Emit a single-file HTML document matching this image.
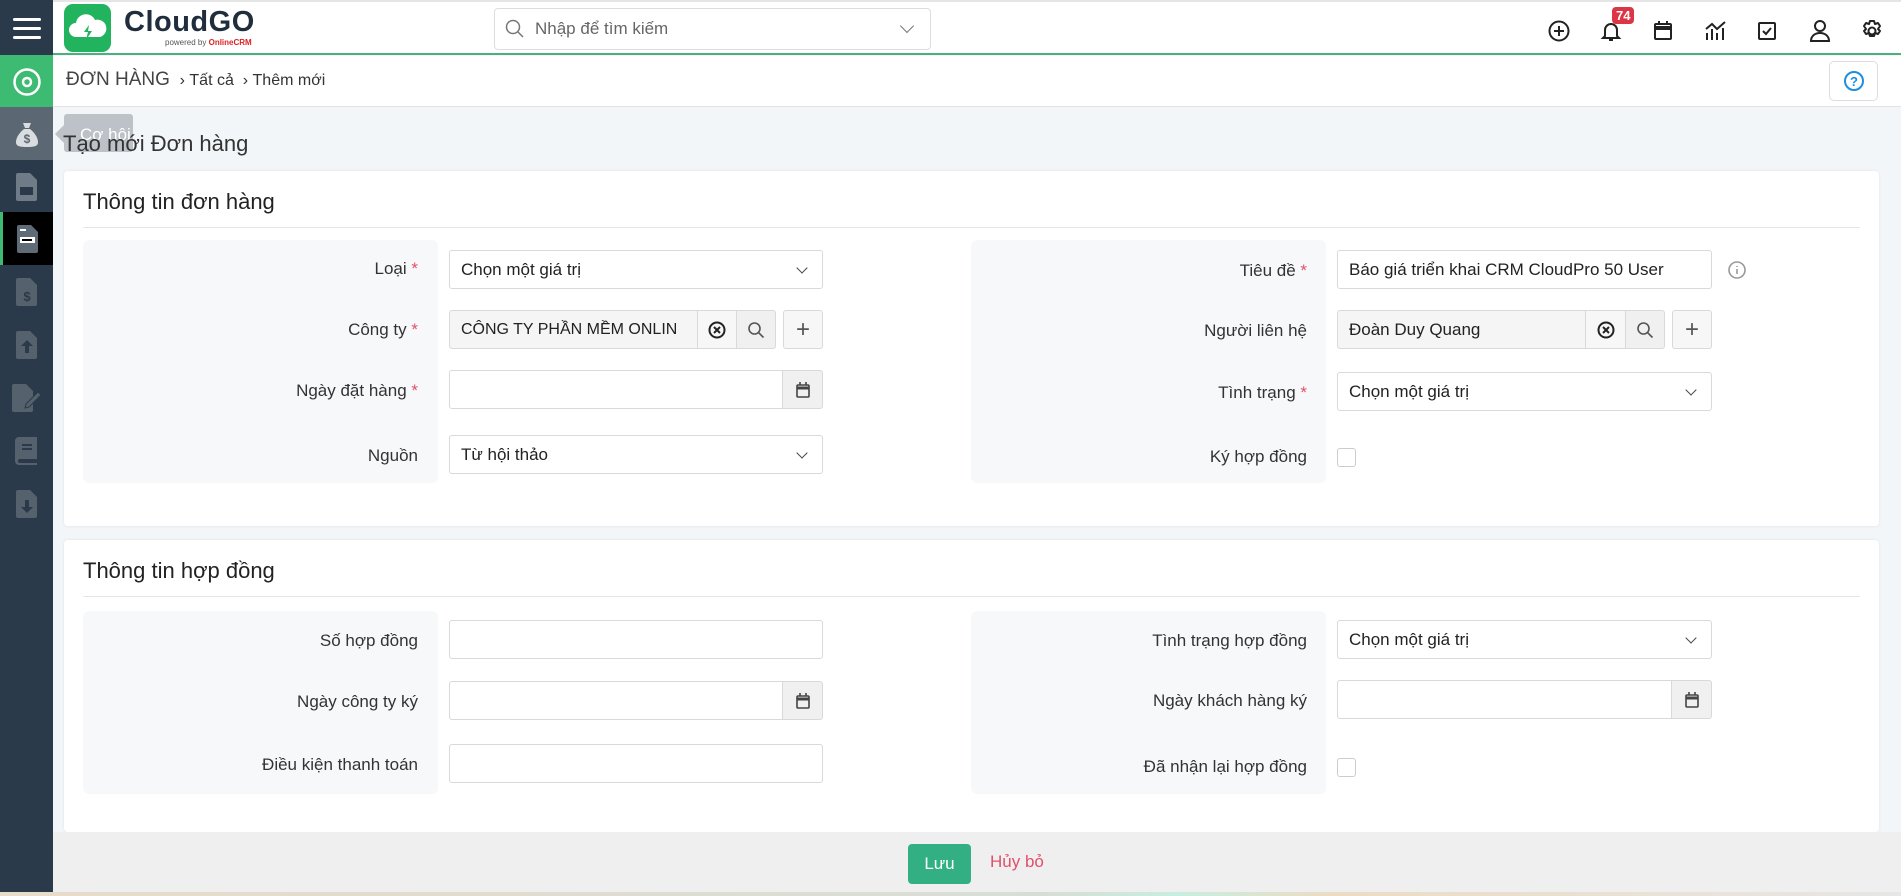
<!DOCTYPE html>
<html><head><meta charset="utf-8"><style>
*{box-sizing:border-box;margin:0;padding:0}
body{width:1901px;height:896px;overflow:hidden;background:#f3f6f9;font-family:"Liberation Sans","DejaVu Sans",sans-serif;color:#333;position:relative}
.a{position:absolute}
.sb{left:0;top:0;width:53px;height:896px;background:#2b3a4a}
.si{position:absolute;left:0;width:53px;height:53px;display:flex;align-items:center;justify-content:center}
.hdr{left:53px;top:0;width:1848px;height:55px;background:#fff;border-bottom:2px solid #4caf7d;border-top:2px solid #e5e5e5}
.bc{left:53px;top:56px;width:1848px;height:51px;background:#fff;border-bottom:1px solid #e3e3e3}
.card{background:#fff;border-radius:4px;box-shadow:0 0 3px rgba(0,0,0,.08)}
.ct{font-size:22px;color:#222}
.hr{height:1px;background:#e6e6e6}
.pan{background:#f7f8fa;border-radius:6px}
.lb{font-size:17px;color:#333;text-align:right;width:320px}
.st{color:#e0506a}
.in{background:#fff;border:1px solid #d9d9d9;border-radius:3px;height:39px;font-size:17px;padding:0 11px;display:flex;align-items:center;color:#222;white-space:nowrap;overflow:hidden}
.gr{background:#f5f5f5}
.btn{background:#f0f0f0;border:1px solid #d9d9d9;height:39px;display:flex;align-items:center;justify-content:center}
.dd::after{content:"";position:absolute;right:16px;top:13px;width:7px;height:7px;border-right:1.6px solid #444;border-bottom:1.6px solid #444;transform:rotate(45deg)}
.cb{width:19px;height:19px;border:1px solid #ccc;border-radius:3px;background:#fff}
</style></head><body>
<div class="a sb">
 <div class="si" style="top:0;height:55px"><svg width="28" height="24"><rect y="2" width="28" height="3" rx="1.5" fill="#fff"/><rect y="11" width="28" height="3" rx="1.5" fill="#fff"/><rect y="20" width="28" height="3" rx="1.5" fill="#fff"/></svg></div>
 <div class="si" style="top:55px;background:#3dbb73"><svg width="30" height="30"><circle cx="15" cy="15" r="12.5" fill="none" stroke="#fff" stroke-width="2.5"/><circle cx="15" cy="15" r="4" fill="none" stroke="#fff" stroke-width="2.5"/></svg></div>
 <div class="si" style="top:107px;background:#5b6772"><svg width="26" height="28"><path d="M9 3h8l-2 5h-4zM10 9h6c5 4 8 9 8 13 0 4-3 5-11 5S2 26 2 22c0-4 3-9 8-13z" fill="#d9dde0"/><text x="13" y="23" font-size="12" font-weight="bold" fill="#5b6772" text-anchor="middle" font-family="Liberation Sans">$</text></svg></div>
 <div class="si" style="top:160px"><svg width="22" height="28"><path d="M2 0h12l7 7v19a2 2 0 0 1-2 2H2a2 2 0 0 1-2-2V2a2 2 0 0 1 2-2z" fill="#6f7b86"/><rect x="4" y="14" width="13" height="8" fill="#2b3a4a"/></svg></div>
 <div class="si" style="top:212px;background:#000;border-left:3px solid #3dbb73"><svg width="22" height="28"><path d="M2 0h12l7 7v19a2 2 0 0 1-2 2H2a2 2 0 0 1-2-2V2a2 2 0 0 1 2-2z" fill="#5f6b76"/><rect x="3" y="12" width="15" height="6" fill="#fff"/><rect x="5" y="14" width="10" height="2" fill="#000"/><rect x="3" y="4" width="6" height="2" fill="#fff"/></svg></div>
 <div class="si" style="top:265px"><svg width="22" height="28"><path d="M2 0h12l7 7v19a2 2 0 0 1-2 2H2a2 2 0 0 1-2-2V2a2 2 0 0 1 2-2z" fill="#55616c"/><text x="11" y="23" font-size="13" font-weight="bold" fill="#2b3a4a" text-anchor="middle">$</text></svg></div>
 <div class="si" style="top:318px"><svg width="22" height="28"><path d="M2 0h12l7 7v19a2 2 0 0 1-2 2H2a2 2 0 0 1-2-2V2a2 2 0 0 1 2-2z" fill="#55616c"/><path d="M11 9l6 6h-4v7h-4v-7H5z" fill="#2b3a4a"/></svg></div>
 <div class="si" style="top:371px"><svg width="30" height="28"><path d="M2 0h12l7 7v19a2 2 0 0 1-2 2H2a2 2 0 0 1-2-2V2a2 2 0 0 1 2-2z" fill="#55616c"/><path d="M26 8l3 3-12 12-4 1 1-4z" fill="#55616c" stroke="#2b3a4a"/></svg></div>
 <div class="si" style="top:424px"><svg width="24" height="28"><path d="M4 0h18v22H5a2 2 0 0 0 0 4h17v2H4a4 4 0 0 1-4-4V4a4 4 0 0 1 4-4z" fill="#55616c"/><rect x="7" y="7" width="10" height="2" fill="#2b3a4a"/><rect x="7" y="11" width="10" height="2" fill="#2b3a4a"/></svg></div>
 <div class="si" style="top:477px"><svg width="22" height="28"><path d="M2 0h12l7 7v19a2 2 0 0 1-2 2H2a2 2 0 0 1-2-2V2a2 2 0 0 1 2-2z" fill="#55616c"/><path d="M11 23l6-6h-4v-7h-4v7H5z" fill="#2b3a4a"/></svg></div>
</div>
<div class="a hdr">
 <div class="a" style="left:11px;top:2px;width:47px;height:48px;background:#22b35e;border-radius:9px"><svg width="47" height="48"><path d="M12 33a7 7 0 0 1 0-14 10 10 0 0 1 19-3 8 8 0 0 1 5 17z" fill="#fff"/><path d="M25 21l-5 7h4l-2 8 6-9h-4z" fill="#22b35e"/></svg></div>
 <div class="a" style="left:71px;top:4px;font-size:29px;font-weight:bold;color:#1f2d3d;letter-spacing:.5px">CloudGO</div>
 <div class="a" style="left:112px;top:36px;font-size:8px;color:#555">powered by <b style="color:#d22">OnlineCRM</b></div>
 <div class="a" style="left:441px;top:6px;width:437px;height:42px;border:1px solid #ddd;border-radius:4px">
  <svg class="a" style="left:10px;top:10px" width="20" height="20"><circle cx="8" cy="8" r="6.5" fill="none" stroke="#777" stroke-width="1.5"/><path d="M13 13l5 5" stroke="#777" stroke-width="1.5"/></svg>
  <div class="a" style="left:40px;top:10px;font-size:17px;color:#666">Nhập để tìm kiếm</div>
  <div class="a" style="right:18px;top:12px;width:10px;height:10px;border-right:1.5px solid #777;border-bottom:1.5px solid #777;transform:rotate(45deg)"></div>
 </div>
 <svg class="a" style="left:1494px;top:17px" width="24" height="24" fill="none" stroke="#222" stroke-width="2"><circle cx="12" cy="12" r="9.5"/><path d="M12 7v10M7 12h10"/></svg>
 <svg class="a" style="left:1546px;top:17px" width="24" height="24" fill="none" stroke="#222" stroke-width="2"><path d="M6 17V11a6 6 0 0 1 12 0v6l2 2H4zM10 21h4"/></svg>
 <div class="a" style="left:1559px;top:5px;background:#dc3545;color:#fff;font-size:13px;font-weight:bold;border-radius:4px;padding:1px 4px">74</div>
 <svg class="a" style="left:1598px;top:17px" width="24" height="24" fill="none" stroke="#222" stroke-width="2"><rect x="4" y="5" width="16" height="15" rx="1"/><path d="M4 9h16" stroke-width="4"/><path d="M8 2v4M16 2v4"/></svg>
 <svg class="a" style="left:1650px;top:16px" width="26" height="26" fill="none" stroke="#222" stroke-width="2"><path d="M3 11l6-5 5 5 8-7M4 15v7M9 11v11M14 15v7M20 10v12"/></svg>
 <svg class="a" style="left:1702px;top:17px" width="24" height="24" fill="none" stroke="#222" stroke-width="2"><rect x="4" y="4" width="16" height="16" rx="1"/><path d="M8 12l3 3 5-6"/></svg>
 <svg class="a" style="left:1755px;top:16px" width="24" height="26" fill="none" stroke="#222" stroke-width="2"><circle cx="12" cy="8" r="5"/><path d="M3 23c0-5 4-8 9-8s9 3 9 8z"/></svg>
 <svg class="a" style="left:1806px;top:16px" width="26" height="26" fill="none" stroke="#222" stroke-width="2"><circle cx="13" cy="13" r="3.5"/><path d="M11 3h4l1 3 3-1 2 3-2 3 2 2-2 3-3-1-1 3h-4l-1-3-3 1-2-3 2-2-2-3 2-3 3 1z" stroke-linejoin="round"/></svg>
</div>
<div class="a bc">
 <div class="a" style="left:13px;top:13px;font-size:19px;color:#444">ĐƠN HÀNG <span style="font-size:16px;color:#333">&nbsp;&#x203A;&nbsp;Tất cả&nbsp;&nbsp;&#x203A;&nbsp;Thêm mới</span></div>
 <div class="a" style="left:1776px;top:5px;width:49px;height:40px;border:1px solid #ddd;border-radius:5px;display:flex;align-items:center;justify-content:center"><svg width="22" height="22"><circle cx="11" cy="11" r="9" fill="none" stroke="#1f8ee0" stroke-width="2"/><text x="11" y="16" font-size="13" font-weight="bold" fill="#1f8ee0" text-anchor="middle">?</text></svg></div>
</div>
<div class="a" style="left:64px;top:114px;width:69px;height:38px;background:#bcc2c7;border-radius:3px;color:#fff;font-size:17px;padding:11px 0 0 16px">Cơ hội</div>
<div class="a" style="left:55px;top:125px;width:0;height:0;border:9px solid transparent;border-right-color:#bcc2c7;border-left:0"></div>
<div class="a" style="left:63px;top:131px;font-size:22px;color:#333">Tạo mới Đơn hàng</div>

<div class="a card" style="left:64px;top:171px;width:1815px;height:355px"></div>
<div class="a ct" style="left:83px;top:189px">Thông tin đơn hàng</div>
<div class="a hr" style="left:83px;top:227px;width:1777px"></div>
<div class="a pan" style="left:83px;top:240px;width:355px;height:243px"></div>
<div class="a pan" style="left:971px;top:240px;width:355px;height:243px"></div>

<div class="a lb" style="left:98px;top:259px">Loại <span class="st">*</span></div>
<div class="a in dd" style="left:449px;top:250px;width:374px">Chọn một giá trị</div>
<div class="a lb" style="left:98px;top:320px">Công ty <span class="st">*</span></div>
<div class="a in gr" style="left:449px;top:310px;width:249px;border-radius:3px 0 0 3px;font-size:16px">CÔNG TY PHẦN MỀM ONLIN</div>
<div class="a btn" style="left:697px;top:310px;width:40px;background:#f7f7f7"><svg width="18" height="18" fill="none" stroke="#222" stroke-width="2"><circle cx="9" cy="9" r="7.5"/><path d="M6 6l6 6M12 6l-6 6"/></svg></div>
<div class="a btn" style="left:736px;top:310px;width:40px;border-radius:0 3px 3px 0"><svg width="18" height="18" fill="none" stroke="#555" stroke-width="1.6"><circle cx="7.5" cy="7.5" r="5.5"/><path d="M11.5 11.5l5 5"/></svg></div>
<div class="a btn" style="left:783px;top:310px;width:40px;border-radius:3px;background:#f7f7f7;font-size:24px;color:#555">+</div>
<div class="a lb" style="left:98px;top:381px">Ngày đặt hàng <span class="st">*</span></div>
<div class="a in" style="left:449px;top:370px;width:334px;border-radius:3px 0 0 3px"></div>
<div class="a btn" style="left:782px;top:370px;width:41px;border-radius:0 3px 3px 0"><svg width="16" height="18" fill="none" stroke="#444" stroke-width="1.6"><rect x="2" y="4" width="12" height="12" rx="1"/><path d="M2 7h12" stroke-width="3"/><path d="M5 1v3M11 1v3"/></svg></div>
<div class="a lb" style="left:98px;top:446px">Nguồn</div>
<div class="a in dd" style="left:449px;top:435px;width:374px">Từ hội thảo</div>

<div class="a lb" style="left:987px;top:261px">Tiêu đề <span class="st">*</span></div>
<div class="a in" style="left:1337px;top:250px;width:375px">Báo giá triển khai CRM CloudPro 50 User</div>
<svg class="a" style="left:1727px;top:260px" width="20" height="20" fill="none" stroke="#999" stroke-width="1.6"><circle cx="10" cy="10" r="8"/><path d="M10 9v5M10 6v1"/></svg>
<div class="a lb" style="left:987px;top:321px">Người liên hệ</div>
<div class="a in gr" style="left:1337px;top:310px;width:249px;border-radius:3px 0 0 3px">Đoàn Duy Quang</div>
<div class="a btn" style="left:1585px;top:310px;width:41px;background:#f7f7f7"><svg width="18" height="18" fill="none" stroke="#222" stroke-width="2"><circle cx="9" cy="9" r="7.5"/><path d="M6 6l6 6M12 6l-6 6"/></svg></div>
<div class="a btn" style="left:1625px;top:310px;width:40px;border-radius:0 3px 3px 0"><svg width="18" height="18" fill="none" stroke="#555" stroke-width="1.6"><circle cx="7.5" cy="7.5" r="5.5"/><path d="M11.5 11.5l5 5"/></svg></div>
<div class="a btn" style="left:1672px;top:310px;width:40px;border-radius:3px;background:#f7f7f7;font-size:24px;color:#555">+</div>
<div class="a lb" style="left:987px;top:383px">Tình trạng <span class="st">*</span></div>
<div class="a in dd" style="left:1337px;top:372px;width:375px">Chọn một giá trị</div>
<div class="a lb" style="left:987px;top:447px">Ký hợp đồng</div>
<div class="a cb" style="left:1337px;top:448px"></div>

<div class="a card" style="left:64px;top:540px;width:1815px;height:292px"></div>
<div class="a ct" style="left:83px;top:558px">Thông tin hợp đồng</div>
<div class="a hr" style="left:83px;top:596px;width:1777px"></div>
<div class="a pan" style="left:83px;top:611px;width:355px;height:183px"></div>
<div class="a pan" style="left:971px;top:611px;width:355px;height:183px"></div>
<div class="a lb" style="left:98px;top:631px">Số hợp đồng</div>
<div class="a in" style="left:449px;top:620px;width:374px"></div>
<div class="a lb" style="left:98px;top:692px">Ngày công ty ký</div>
<div class="a in" style="left:449px;top:681px;width:334px;border-radius:3px 0 0 3px"></div>
<div class="a btn" style="left:782px;top:681px;width:41px;border-radius:0 3px 3px 0"><svg width="16" height="18" fill="none" stroke="#444" stroke-width="1.6"><rect x="2" y="4" width="12" height="12" rx="1"/><path d="M2 7h12" stroke-width="3"/><path d="M5 1v3M11 1v3"/></svg></div>
<div class="a lb" style="left:98px;top:755px">Điều kiện thanh toán</div>
<div class="a in" style="left:449px;top:744px;width:374px"></div>
<div class="a lb" style="left:987px;top:631px">Tình trạng hợp đồng</div>
<div class="a in dd" style="left:1337px;top:620px;width:375px">Chọn một giá trị</div>
<div class="a lb" style="left:987px;top:691px">Ngày khách hàng ký</div>
<div class="a in" style="left:1337px;top:680px;width:335px;border-radius:3px 0 0 3px"></div>
<div class="a btn" style="left:1671px;top:680px;width:41px;border-radius:0 3px 3px 0"><svg width="16" height="18" fill="none" stroke="#444" stroke-width="1.6"><rect x="2" y="4" width="12" height="12" rx="1"/><path d="M2 7h12" stroke-width="3"/><path d="M5 1v3M11 1v3"/></svg></div>
<div class="a lb" style="left:987px;top:757px">Đã nhận lại hợp đồng</div>
<div class="a cb" style="left:1337px;top:758px"></div>

<div class="a" style="left:53px;top:832px;width:1848px;height:60px;background:#efefef"></div>
<div class="a" style="left:908px;top:844px;width:63px;height:40px;background:#32b083;border-radius:4px;color:#fff;font-size:17px;display:flex;align-items:center;justify-content:center">Lưu</div>
<div class="a" style="left:990px;top:852px;font-size:17px;color:#e0506a">Hủy bỏ</div>
<div class="a" style="left:0;top:892px;width:1901px;height:4px;background:linear-gradient(90deg,#e8dccb,#d7ddd6 55%,#c8eee0 62%,#ecdcc4 70%,#e6e6e6)"></div>
</body></html>
